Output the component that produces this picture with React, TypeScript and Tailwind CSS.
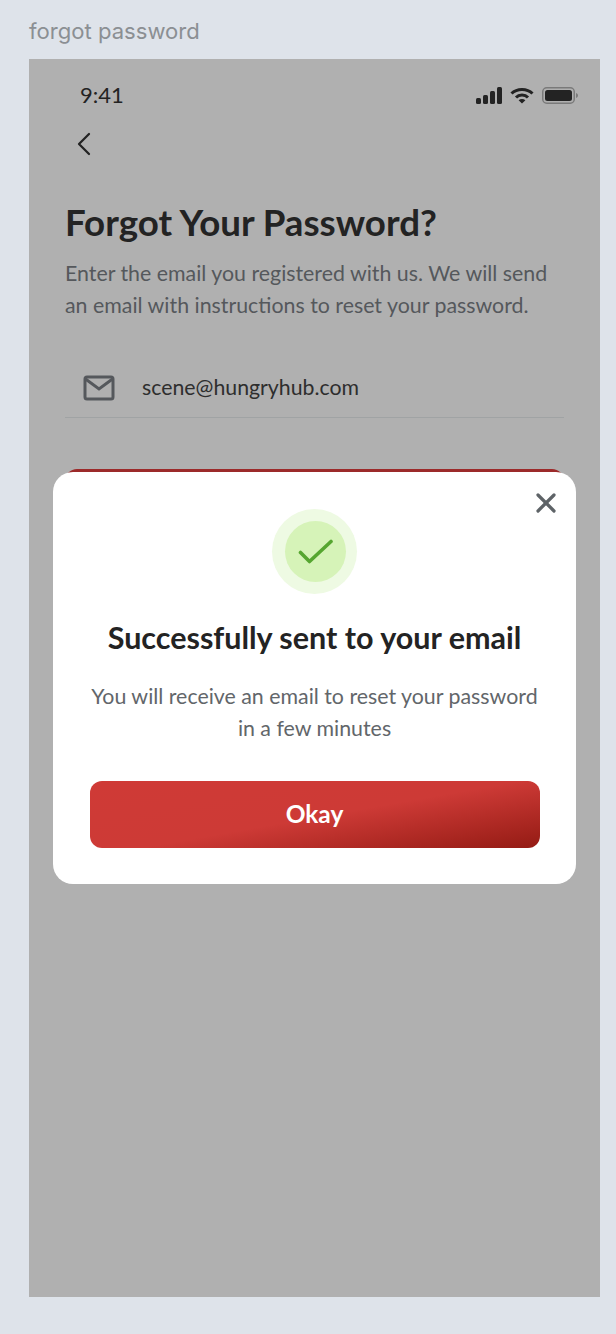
import React from 'react';
import { X } from 'lucide-react';

function StatusIcons() {
  return (
    <div className="flex items-center gap-[8px]">
      <svg width="26" height="17" viewBox="0 0 26 17" fill="#232323">
        <rect x="0" y="11" width="5" height="6" rx="1.5" />
        <rect x="7" y="8" width="5" height="9" rx="1.5" />
        <rect x="14" y="4" width="5" height="13" rx="1.5" />
        <rect x="21" y="0" width="5" height="17" rx="1.5" />
      </svg>
      <svg width="24" height="17" viewBox="0 0 24 17" fill="none" stroke="#232323" strokeWidth="3">
        <path d="M1.5 6.5 C7 1 17 1 22.5 6.5" />
        <path d="M6 10.5 C9 7.3 15 7.3 18 10.5" />
        <path d="M12 16.5 L8.6 13.2 C10.6 11.6 13.4 11.6 15.4 13.2 Z" fill="#232323" stroke="none" />
      </svg>
      <svg width="36" height="17" viewBox="0 0 36 17" fill="none">
        <rect x="0.75" y="0.75" width="31.5" height="15.5" rx="4" stroke="#7a7a7a" strokeWidth="1.5" />
        <rect x="3" y="3" width="27" height="11" rx="2.5" fill="#232323" />
        <path d="M34 6 C35.3 6.4 36 7.4 36 8.5 C36 9.6 35.3 10.6 34 11 Z" fill="#7a7a7a" />
      </svg>
    </div>
  );
}

export default function App() {
  return (
    <div className="min-h-[1334px] bg-[#dee3ea] pl-[29px] pr-4 pt-[19px] font-['Lato',sans-serif]">
      <p className="font-['Inter',sans-serif] text-[22.1px] leading-[25px] text-[#8b8f93] mb-[15px]">forgot password</p>
      <div className="relative h-[1238px] bg-[#b0b0b0] overflow-hidden">
        <div className="flex items-center justify-between pl-[51px] pr-[22px] pt-[22px]">
          <span className="text-[22px] leading-[28px] text-[#232323]">9:41</span>
          <StatusIcons />
        </div>
        <div className="pl-[35px] pt-[15px]">
          <svg width="40" height="40" viewBox="0 0 24 24" fill="none" stroke="#232323" strokeWidth="1.35" strokeLinecap="round" strokeLinejoin="round">
            <path d="m15 18-6-6 6-6" />
          </svg>
        </div>
        <div className="px-[36px] pt-[36px]">
          <h1 className="text-[36.7px] leading-[44px] font-bold text-[#232323]">Forgot Your Password?</h1>
          <p className="mt-[13px] text-[21.35px] leading-[32px] text-[#55585c]">
            Enter the email you registered with us. We will send an email with instructions to reset your password.
          </p>
          <div className="mt-[37px] flex items-center gap-[27px] pl-[18px] h-[60px] border-b border-[#a0a3a4]">
            <svg width="32" height="26" viewBox="0 0 32 26" fill="none" stroke="#55585c" strokeWidth="3">
              <rect x="2" y="2" width="28" height="22" rx="2" />
              <path d="M2.5 4 L16 14 L29.5 4" />
            </svg>
            <span className="text-[21.3px] text-[#2e2e2e]">scene@hungryhub.com</span>
          </div>
          <div className="mt-[51px] h-[60px] rounded-xl bg-[#9c2a2a]" />
        </div>

        <div className="absolute left-[24px] top-[413px] w-[523px] h-[412px] rounded-[20px] bg-white px-[36.5px] pt-[37px]">
          <button className="absolute right-[14px] top-[15px] text-[#5e6367]">
            <X className="w-[32px] h-[32px]" strokeWidth={2.4} />
          </button>
          <div className="mx-auto w-[85px] h-[85px] rounded-full bg-[#eefae3] flex items-center justify-center">
            <div className="ml-[2px] w-[61px] h-[61px] rounded-full bg-[#d6f3b8] flex items-center justify-center">
              <svg width="36" height="28" viewBox="0 0 36 28" fill="none" stroke="#56a630" strokeWidth="3.6" strokeLinecap="round" strokeLinejoin="round">
                <path d="M2.5 14.5 L11.5 23.5 L33 3.5" />
              </svg>
            </div>
          </div>
          <h2 className="mt-[23px] text-center text-[30.5px] leading-[40px] font-bold text-[#232323]">Successfully sent to your email</h2>
          <p className="mt-[23px] text-center text-[21.35px] leading-[32px] text-[#62666a]">
            You will receive an email to reset your password
            <br />
            in a few minutes
          </p>
          <button className="mt-[37px] w-full h-[67px] rounded-xl bg-[linear-gradient(170deg,#cf3a36_0%,#cd3a36_52%,#941b14_100%)] text-white text-[24.5px] font-bold">
            Okay
          </button>
        </div>
      </div>
    </div>
  );
}
